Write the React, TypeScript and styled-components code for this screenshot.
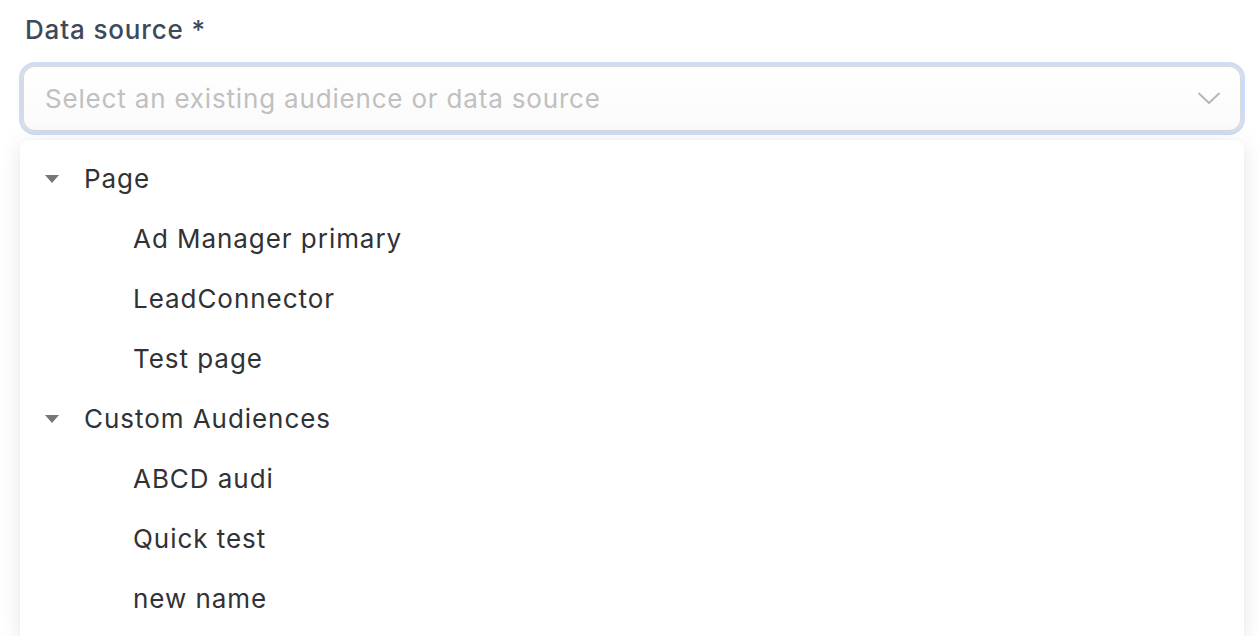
import React from "react";
import styled, { createGlobalStyle } from "styled-components";

const Global = createGlobalStyle`
  html, body { margin: 0; padding: 0; background: #ffffff; }
  body { font-family: Inter, "Noto Sans", "Liberation Sans", sans-serif; overflow: hidden; }
  * { box-sizing: border-box; }
`;

const Page = styled.div`
  width: 1258px;
  height: 636px;
  padding: 12px 14px 0 20px;
  display: flex;
  flex-direction: column;
  overflow: hidden;
`;

const Label = styled.label`
  margin-left: 5px;
  font-size: 26px;
  line-height: 36px;
  font-weight: 500;
  letter-spacing: 0.85px;
  color: #3e4959;
  margin-bottom: 17px;
`;

const Field = styled.div`
  margin: 0 2px;
  height: 67px;
  border: 2px solid #dadada;
  border-radius: 13px;
  box-shadow: 0 0 0 3px #cfdcf8;
  background: linear-gradient(#ffffff, #fafafa);
  display: flex;
  align-items: center;
  justify-content: space-between;
  padding: 0 20px 0 21px;
`;

const Placeholder = styled.span`
  font-size: 26px;
  color: #c0c0c0;
  letter-spacing: 0.82px;
`;

const Menu = styled.div`
  margin-top: 8px;
  flex: 1;
  background: #ffffff;
  border-radius: 8px 8px 0 0;
  box-shadow: 0 4px 22px rgba(0, 0, 0, 0.1), 0 0 2px rgba(0, 0, 0, 0.05);
  padding-top: 8px;
  display: flex;
  flex-direction: column;
`;

const Row = styled.div<{ $indent: number }>`
  height: 60px;
  display: flex;
  align-items: center;
  padding-left: ${(p) => p.$indent}px;
  font-size: 26px;
  letter-spacing: 0.95px;
  color: #303236;
`;

const Caret = styled.span`
  width: 14px;
  display: inline-flex;
  margin-right: 25px;
  margin-top: 1px;
`;

const groups = [
  { name: "Page", items: ["Ad Manager primary", "LeadConnector", "Test page"] },
  { name: "Custom Audiences", items: ["ABCD audi", "Quick test", "new name"] },
];

export default function App() {
  return (
    <Page>
      <Global />
      <Label>Data source *</Label>
      <Field>
        <Placeholder>Select an existing audience or data source</Placeholder>
        <svg width="22" height="13" viewBox="0 0 22 13" fill="none">
          <path d="M1 1.5 L11 11 L21 1.5" stroke="#b4b4b4" strokeWidth="1.8" strokeLinecap="round" strokeLinejoin="round" />
        </svg>
      </Field>
      <Menu>
        {groups.map((g) => (
          <React.Fragment key={g.name}>
            <Row $indent={25}>
              <Caret>
                <svg width="14" height="8" viewBox="0 0 14 8">
                  <path d="M0 0 H14 L7 8 Z" fill="#73767b" />
                </svg>
              </Caret>
              {g.name}
            </Row>
            {g.items.map((it) => (
              <Row key={it} $indent={113}>
                {it}
              </Row>
            ))}
          </React.Fragment>
        ))}
      </Menu>
    </Page>
  );
}
